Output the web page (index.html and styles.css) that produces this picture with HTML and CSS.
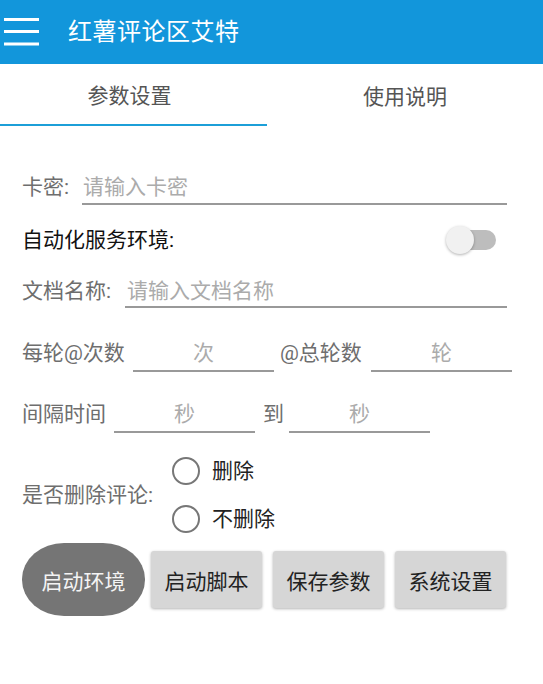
FILE: index.html
```html
<!DOCTYPE html>
<html lang="zh">
<head>
<meta charset="utf-8">
<title>红薯评论区艾特</title>
<link rel="stylesheet" href="styles.css">
</head>
<body>
<header class="appbar">
  <svg class="menu" width="35" height="30" viewBox="0 0 35 30">
    <rect x="0" y="0" width="35" height="3" fill="#fff"/>
    <rect x="0" y="12" width="35" height="3" fill="#fff"/>
    <rect x="0" y="24.5" width="35" height="3" fill="#fff"/>
  </svg>
  <h1 class="title">红薯评论区艾特</h1>
</header>
<nav class="tabs">
  <div class="tab active">参数设置</div>
  <div class="tab">使用说明</div>
</nav>
<main class="form">
  <div class="row row-kami">
    <span class="label w-kami">卡密:</span>
    <span class="field wide">请输入卡密</span>
  </div>
  <div class="row row-env">
    <span class="label dark">自动化服务环境:</span>
    <span class="switch"><span class="track"></span><span class="thumb"></span></span>
  </div>
  <div class="row row-doc">
    <span class="label w-doc">文档名称:</span>
    <span class="field wide">请输入文档名称</span>
  </div>
  <div class="row row-count">
    <span class="label w-count">每轮@次数</span>
    <span class="field num">次</span>
    <span class="label w-total">@总轮数</span>
    <span class="field num">轮</span>
  </div>
  <div class="row row-interval">
    <span class="label w-interval">间隔时间</span>
    <span class="field num">秒</span>
    <span class="label w-to">到</span>
    <span class="field num">秒</span>
  </div>
  <div class="row row-delete">
    <span class="label w-delete">是否删除评论:</span>
    <div class="radios">
      <div class="radio"><span class="circle"></span><span class="rtext">删除</span></div>
      <div class="radio"><span class="circle"></span><span class="rtext">不删除</span></div>
    </div>
  </div>
  <div class="row row-buttons">
    <button class="btn oval">启动环境</button>
    <button class="btn flat first">启动脚本</button>
    <button class="btn flat">保存参数</button>
    <button class="btn flat">系统设置</button>
  </div>
</main>
</body>
</html>
```

FILE: styles.css
```css
* { box-sizing: border-box; }
html, body {
  margin: 0;
  padding: 0;
  background: #fff;
  font-family: "Roboto", "Noto Sans CJK SC", sans-serif;
}
.appbar {
  height: 64px;
  background: #1296db;
  display: flex;
  align-items: center;
}
.menu {
  margin-left: 4px;
  margin-top: 2px;
  display: block;
}
.title {
  margin: 0 0 0 29px;
  font-size: 24px;
  font-weight: 400;
  color: #fff;
  line-height: 30px;
  letter-spacing: 0.5px;
}
.tabs {
  display: flex;
  height: 62px;
}
.tab {
  display: flex;
  align-items: center;
  justify-content: center;
  font-size: 21px;
  color: #555;
}
.tab.active {
  width: 267px;
  padding-right: 8px;
  border-bottom: 2px solid #1c9fd8;
}
.tab:not(.active) {
  flex: 1;
}
.form {
  padding: 47px 0 0 22px;
}
.row {
  display: flex;
  align-items: flex-end;
  font-size: 21px;
  line-height: 28px;
}
.label {
  color: #6e6e6e;
  white-space: nowrap;
  flex-shrink: 0;
}
.label.dark { color: #111; }
.w-kami { width: 60px; }
.w-doc { width: 103px; }
.w-count { width: 111px; }
.w-total { width: 91px; margin-left: 6px; }
.w-interval { width: 92px; }
.w-to { width: 26px; margin-left: 8px; }
.w-delete { width: 150px; }
.field {
  color: #ababab;
  border-bottom: 2px solid #999;
}
.field.wide {
  width: 425px;
  padding: 0 0 2px 1px;
}
.row-kami .label { padding-bottom: 4px; }
.row-env {
  margin-top: 21px;
  align-items: center;
}
.switch {
  position: relative;
  width: 50px;
  height: 28px;
  margin-left: auto;
  margin-right: 47px;
}
.track {
  position: absolute;
  left: 8px;
  top: 4px;
  width: 42px;
  height: 20px;
  border-radius: 10px;
  background: #bdbdbd;
}
.thumb {
  position: absolute;
  left: 0;
  top: 0;
  width: 28px;
  height: 28px;
  border-radius: 50%;
  background: #f1f1f1;
  box-shadow: 0 1px 3px rgba(0,0,0,0.3);
}
.row-doc { margin-top: 23px; }
.row-doc .label { padding-bottom: 3px; }
.row-doc .field.wide {
  width: 382px;
  padding: 0 0 1px 2px;
}
.row-count { margin-top: 31px; }
.row-count .label, .row-interval .label { padding-bottom: 5px; }
.field.num {
  width: 141px;
  text-align: center;
  padding-bottom: 3px;
}
.row-interval { margin-top: 28px; }
.row-delete {
  margin-top: 14px;
  align-items: center;
}
.radios {
  display: flex;
  flex-direction: column;
}
.radio {
  height: 48px;
  display: flex;
  align-items: center;
}
.circle {
  width: 28px;
  height: 28px;
  border-radius: 50%;
  border: 2.5px solid #777;
}
.rtext {
  margin-left: 12px;
  color: #222;
}
.row-buttons {
  align-items: center;
}
.btn {
  font-family: "Roboto", "Noto Sans CJK SC", sans-serif;
  font-size: 21px;
  border: none;
  padding: 0;
  color: #222;
}
.oval {
  width: 123px;
  height: 73px;
  border-radius: 42px / 36px;
  background: #757575;
  color: #f4f4f4;
}
.flat {
  width: 111px;
  height: 57px;
  border-radius: 3px;
  background: #d6d6d6;
  box-shadow: 0 1px 3px rgba(0,0,0,0.3);
  margin-left: 11px;
}
.flat.first { margin-left: 6px; }
```
